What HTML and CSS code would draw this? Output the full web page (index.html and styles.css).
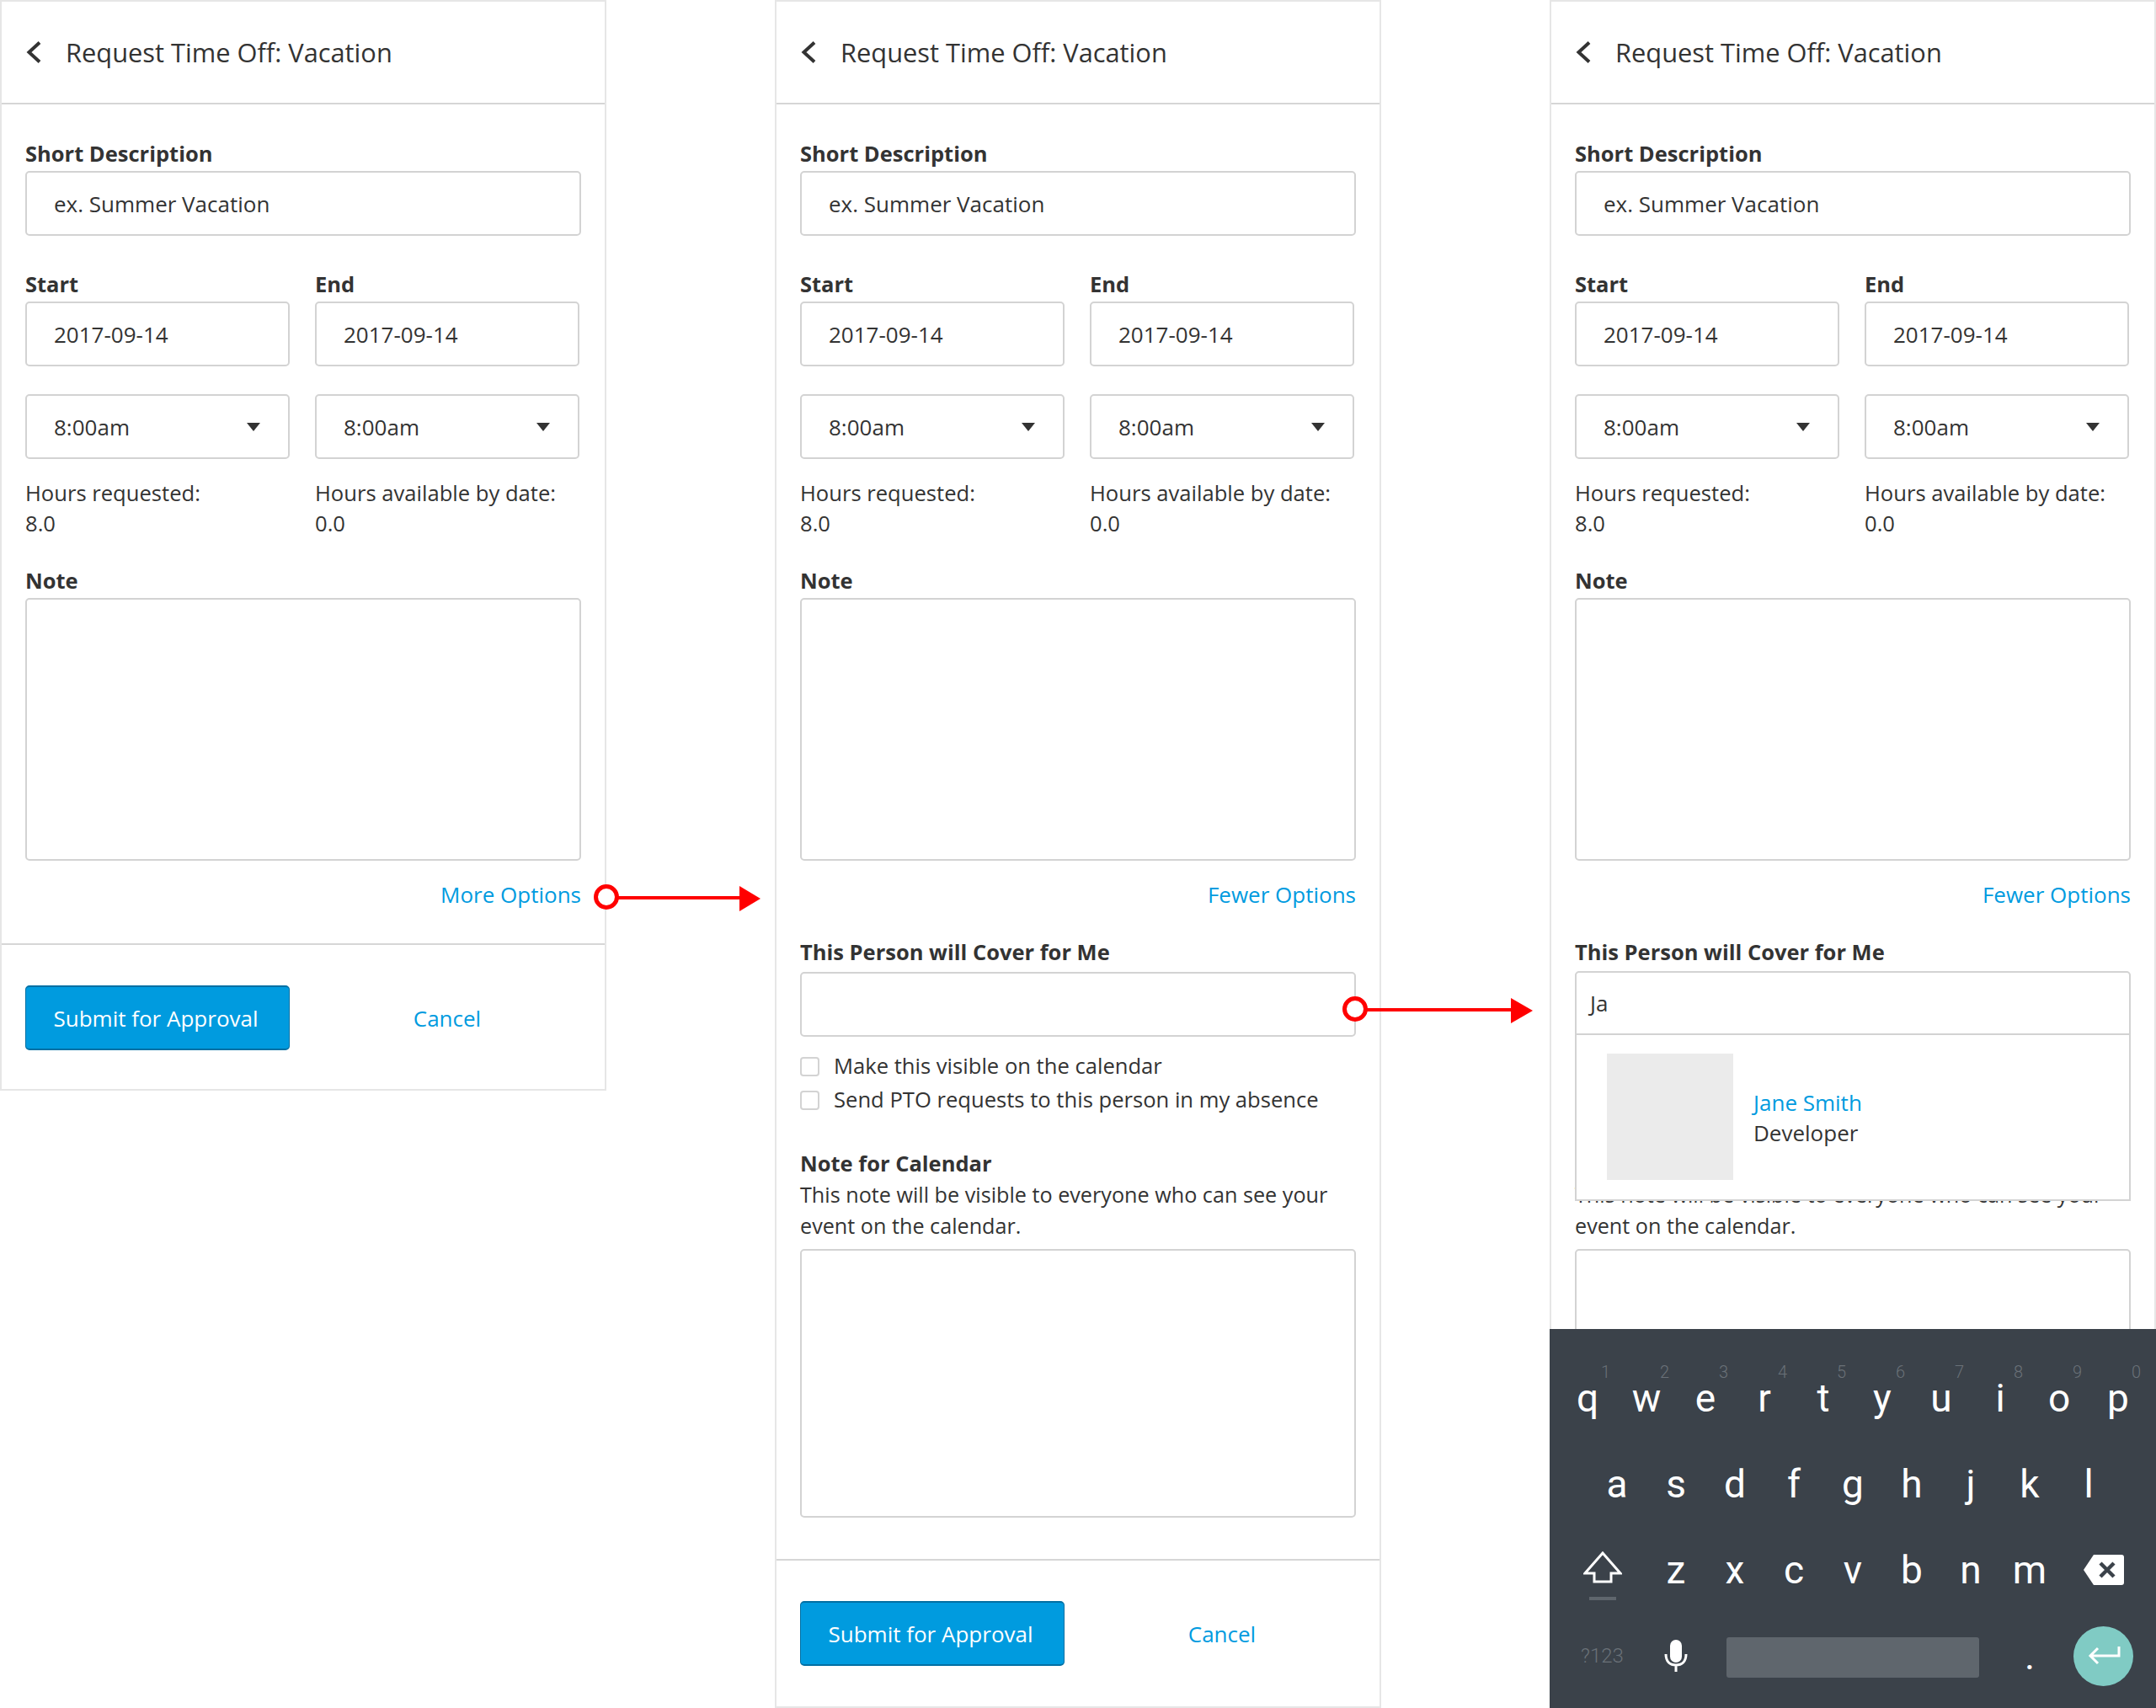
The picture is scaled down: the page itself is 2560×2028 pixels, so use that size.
FILE: index.html
```html
<!DOCTYPE html>
<html lang="en">
<head>
  <title>Request Time Off</title>
  <link rel="stylesheet" href="styles.css">
</head>
<body>
<div class="canvas">

  <!-- collapsed -->
  <div class="panel">
    <div class="panel-header">
      <svg class="back-icon" viewBox="0 0 20 26"><path d="M17 1.5 L4.5 13 L17 24.5"/></svg>
      <h1>Request Time Off: Vacation</h1>
    </div>
    <div class="form">
      <label class="section-title">Short Description</label>
      <input class="field" type="text" placeholder="ex. Summer Vacation">
      <div class="two-col dates">
        <div><label class="section-title">Start</label><input class="field" type="text" value="2017-09-14"></div>
        <div><label class="section-title">End</label><input class="field" type="text" value="2017-09-14"></div>
      </div>
      <div class="two-col times">
        <div class="field select">8:00am<span class="caret"></span></div>
        <div class="field select">8:00am<span class="caret"></span></div>
      </div>
      <div class="two-col hours">
        <div>Hours requested:<br>8.0</div>
        <div>Hours available by date:<br>0.0</div>
      </div>
      <label class="section-title note-label">Note</label>
      <div class="field note-area"></div>
      <div class="options-link"><a href="#">More Options</a></div>
    </div>
    <div class="panel-footer two-col">
      <button>Submit for Approval</button>
      <a class="cancel" href="#">Cancel</a>
    </div>
  </div>

  <!-- expanded -->
  <div class="panel panel-tall">
    <div class="panel-header">
      <svg class="back-icon" viewBox="0 0 20 26"><path d="M17 1.5 L4.5 13 L17 24.5"/></svg>
      <h1>Request Time Off: Vacation</h1>
    </div>
    <div class="form">
      <label class="section-title">Short Description</label>
      <input class="field" type="text" placeholder="ex. Summer Vacation">
      <div class="two-col dates">
        <div><label class="section-title">Start</label><input class="field" type="text" value="2017-09-14"></div>
        <div><label class="section-title">End</label><input class="field" type="text" value="2017-09-14"></div>
      </div>
      <div class="two-col times">
        <div class="field select">8:00am<span class="caret"></span></div>
        <div class="field select">8:00am<span class="caret"></span></div>
      </div>
      <div class="two-col hours">
        <div>Hours requested:<br>8.0</div>
        <div>Hours available by date:<br>0.0</div>
      </div>
      <label class="section-title note-label">Note</label>
      <div class="field note-area"></div>
      <div class="options-link"><a href="#">Fewer Options</a></div>

      <label class="section-title cover-label">This Person will Cover for Me</label>
      <input class="field" type="text">
      <div class="checks">
        <div class="check-row"><span class="checkbox"></span>Make this visible on the calendar</div>
        <div class="check-row"><span class="checkbox"></span>Send PTO requests to this person in my absence</div>
      </div>
      <label class="section-title calendar-label">Note for Calendar</label>
      <div class="description">This note will be visible to everyone who can see your event on the calendar.</div>
      <div class="field calendar-area"></div>
    </div>
    <div class="panel-footer two-col footer-tall">
      <button>Submit for Approval</button>
      <a class="cancel" href="#">Cancel</a>
    </div>
  </div>

  <!-- typing in the cover field -->
  <div class="panel panel-tall">
    <div class="panel-header">
      <svg class="back-icon" viewBox="0 0 20 26"><path d="M17 1.5 L4.5 13 L17 24.5"/></svg>
      <h1>Request Time Off: Vacation</h1>
    </div>
    <div class="form">
      <label class="section-title">Short Description</label>
      <input class="field" type="text" placeholder="ex. Summer Vacation">
      <div class="two-col dates">
        <div><label class="section-title">Start</label><input class="field" type="text" value="2017-09-14"></div>
        <div><label class="section-title">End</label><input class="field" type="text" value="2017-09-14"></div>
      </div>
      <div class="two-col times">
        <div class="field select">8:00am<span class="caret"></span></div>
        <div class="field select">8:00am<span class="caret"></span></div>
      </div>
      <div class="two-col hours">
        <div>Hours requested:<br>8.0</div>
        <div>Hours available by date:<br>0.0</div>
      </div>
      <label class="section-title note-label">Note</label>
      <div class="field note-area"></div>
      <div class="options-link"><a href="#">Fewer Options</a></div>

      <label class="section-title cover-label">This Person will Cover for Me</label>
      <div class="combo-wrap">
        <input class="field" type="text">
        <div class="combo">
          <div class="combo-input">Ja</div>
          <div class="combo-result">
            <div class="photo"></div>
            <div class="person">
              <a href="#">Jane Smith</a>
              <div>Developer</div>
            </div>
          </div>
        </div>
      </div>
      <div class="under-combo">
        <div class="checks">
          <div class="check-row"><span class="checkbox"></span>Make this visible on the calendar</div>
          <div class="check-row"><span class="checkbox"></span>Send PTO requests to this person in my absence</div>
        </div>
        <label class="section-title calendar-label">Note for Calendar</label>
      </div>
      <div class="description">This note will be visible to everyone who can see your event on the calendar.</div>
      <div class="field calendar-area"></div>
    </div>

    <div class="keyboard">
      <div class="key-row">
        <span class="key">q<i>1</i></span><span class="key">w<i>2</i></span><span class="key">e<i>3</i></span><span class="key">r<i>4</i></span><span class="key">t<i>5</i></span><span class="key">y<i>6</i></span><span class="key">u<i>7</i></span><span class="key">i<i>8</i></span><span class="key">o<i>9</i></span><span class="key">p<i>0</i></span>
      </div>
      <div class="key-row row-home">
        <span class="key">a</span><span class="key">s</span><span class="key">d</span><span class="key">f</span><span class="key">g</span><span class="key">h</span><span class="key">j</span><span class="key">k</span><span class="key">l</span>
      </div>
      <div class="key-row">
        <span class="key key-wide key-shift">
          <svg class="shift-icon" viewBox="0 0 46 38"><path d="M23 2 L44 26 H33 V36 H13 V26 H2 Z"/></svg>
          <span class="shift-bar"></span>
        </span>
        <span class="key">z</span><span class="key">x</span><span class="key">c</span><span class="key">v</span><span class="key">b</span><span class="key">n</span><span class="key">m</span>
        <span class="key key-wide">
          <svg class="backspace-icon" viewBox="0 0 48 36"><path class="backspace-body" d="M12 0 H45 Q48 0 48 3 V33 Q48 36 45 36 H12 L0 18 Z"/><path class="backspace-x" d="M20 10 L36 26 M36 10 L20 26"/></svg>
        </span>
      </div>
      <div class="key-row">
        <span class="key key-wide key-symbols">?123</span>
        <span class="key">
          <svg class="mic-icon" viewBox="0 0 28 38"><rect class="mic-body" x="7" y="0" width="14" height="27" rx="7"/><path class="mic-stand" d="M2 17 C2 26 7 30 14 30 C21 30 26 26 26 17 M14 30 V38"/></svg>
        </span>
        <span class="spacebar"></span>
        <span class="key">.</span>
        <span class="key key-wide">
          <span class="enter-btn">
            <svg class="enter-icon" viewBox="0 0 40 24"><path d="M38 1 V12 H4 M13 3 L4 12 L13 21"/></svg>
          </span>
        </span>
      </div>
    </div>
  </div>

  <!-- flow arrows between the screens -->
  <svg class="flow" viewBox="0 0 2560 2028">
    <line x1="734" y1="1066" x2="880" y2="1066"/>
    <circle cx="720" cy="1065" r="12.5"/>
    <polygon points="878,1052 903,1067 878,1082"/>
    <line x1="1623" y1="1199" x2="1796" y2="1199"/>
    <circle cx="1609" cy="1198" r="12.5"/>
    <polygon points="1794,1185 1820,1200 1794,1215"/>
  </svg>
</div>
</body>
</html>
```

FILE: styles.css
```css
* {
  box-sizing: border-box;
}

body {
  margin: 0;
  font-family: 'Open Sans', 'Noto Sans', sans-serif;
  font-size: 26px;
  line-height: 36px;
  color: #333;
  background-color: #fff;
}

a {
  color: #009bdf;
  text-decoration: none;
}

.canvas {
  position: relative;
  display: flex;
  align-items: flex-start;
  gap: 200px;
  height: 2028px;
  overflow: hidden;
}

.panel {
  position: relative;
  flex: 0 0 720px;
  border: 2px solid #e6e6e6;
  background: #fff;
}

.panel-tall {
  height: 2028px;
}

.panel-header {
  display: flex;
  align-items: center;
  height: 122px;
  padding-left: 28px;
  border-bottom: 2px solid #d6d6d6;
}

.panel-header h1 {
  margin: 0 0 0 28px;
  font-size: 30.8px;
  font-weight: 400;
  line-height: 40px;
}

.back-icon {
  width: 20px;
  height: 26px;
  fill: none;
  stroke: #333;
  stroke-width: 4;
}

.form {
  padding: 40px 28px 0;
}

.section-title {
  display: block;
  margin-bottom: 3px;
  font-size: 25.5px;
  font-weight: 700;
}

.field {
  display: block;
  width: 100%;
  height: 77px;
  padding: 0 32px;
  border: 2px solid #d3d3d3;
  border-radius: 5px;
  background: #fff;
  font-family: inherit;
  font-size: 26px;
  color: #333;
  outline: none;
}

.field::placeholder {
  color: #333;
  opacity: 1;
}

.two-col {
  display: grid;
  grid-template-columns: 314px 314px;
  column-gap: 30px;
}

.dates {
  margin-top: 39px;
}

.times {
  margin-top: 33px;
}

.select {
  position: relative;
  line-height: 75px;
}

.caret {
  position: absolute;
  top: 32px;
  right: 33px;
  border-top: 10px solid #333;
  border-left: 8px solid transparent;
  border-right: 8px solid transparent;
}

.hours {
  margin-top: 23px;
  font-size: 25.6px;
}

.note-label {
  margin-top: 31px;
}

.note-area {
  height: 312px;
}

.options-link {
  margin-top: 22px;
  text-align: right;
}

.panel-footer {
  margin-top: 40px;
  padding: 48px 28px 46px;
  border-top: 2px solid #d6d6d6;
  align-items: center;
}

.footer-tall {
  margin-top: 49px;
}

button {
  height: 77px;
  padding: 0 4px 0 0;
  border: 1px solid #006fa3;
  border-top-width: 2px;
  border-bottom-width: 2px;
  border-radius: 5px;
  background-color: #009bdf;
  font-family: inherit;
  font-size: 26px;
  color: #fff;
}

.cancel {
  text-align: center;
}

.cover-label {
  margin-top: 32px;
  margin-bottom: 6px;
}

.checks {
  margin-top: 15px;
}

.check-row {
  display: flex;
  align-items: center;
  height: 40px;
  font-size: 25.6px;
}

.checkbox {
  width: 23px;
  height: 23px;
  margin-right: 17px;
  border: 2px solid #d3d3d3;
  border-radius: 4px;
}

.calendar-label {
  margin-top: 37px;
  margin-bottom: 1px;
}

.description {
  font-size: 25.2px;
  line-height: 37px;
}

.calendar-area {
  height: 319px;
  margin-top: 9px;
}

/* search dropdown sits on top of the fields below */
.combo-wrap {
  position: relative;
}

.combo {
  position: absolute;
  top: -1px;
  left: 0;
  width: 100%;
  height: 273px;
  border: 2px solid #d3d3d3;
  border-radius: 5px 5px 0 0;
  background: #fff;
}

.combo-input {
  height: 74px;
  padding: 18px 16px 0;
  border-bottom: 2px solid #d3d3d3;
}

.combo-result {
  display: flex;
  align-items: center;
  padding: 22px 36px;
}

.photo {
  width: 150px;
  height: 150px;
  margin-right: 24px;
  background-color: #ebebeb;
}

.person {
  margin-top: 2px;
}

.under-combo {
  visibility: hidden;
}

/* android keyboard */
.keyboard {
  position: absolute;
  left: -2px;
  right: -2px;
  bottom: -2px;
  height: 450px;
  padding: 31px 10px 0;
  background-color: #3b424a;
  font-family: Roboto, sans-serif;
  color: #fff;
}

.key-row {
  display: flex;
  height: 102px;
}

.row-home {
  padding-left: 35px;
}

.key {
  position: relative;
  display: flex;
  align-items: center;
  justify-content: center;
  flex: 0 0 70px;
  font-size: 46px;
  line-height: 1;
}

.key i {
  position: absolute;
  top: 10px;
  right: 8px;
  font-size: 20px;
  font-style: normal;
  font-weight: 300;
  color: #6a7178;
}

.key-wide {
  flex-basis: 105px;
}

.key-shift {
  flex-direction: column;
  padding-top: 14px;
}

.shift-icon {
  width: 46px;
  height: 38px;
  fill: none;
  stroke: #fff;
  stroke-width: 3;
}

.shift-bar {
  width: 32px;
  height: 4px;
  margin-top: 16px;
  background-color: #5f666d;
}

.backspace-icon {
  width: 48px;
  height: 36px;
}

.backspace-body {
  fill: #fff;
}

.backspace-x {
  fill: none;
  stroke: #3b424a;
  stroke-width: 4.5;
}

.key-symbols {
  font-size: 24px;
  font-weight: 300;
  color: #6a7178;
}

.mic-icon {
  width: 28px;
  height: 38px;
}

.mic-body {
  fill: #fff;
}

.mic-stand {
  fill: none;
  stroke: #fff;
  stroke-width: 3;
}

.spacebar {
  flex: 0 0 300px;
  height: 48px;
  margin: 29px 25px 0;
  border-radius: 3px;
  background-color: #5f666d;
}

.enter-btn {
  display: flex;
  align-items: center;
  justify-content: center;
  width: 71px;
  height: 71px;
  border-radius: 50%;
  background-color: #80cbc4;
}

.enter-icon {
  width: 40px;
  height: 24px;
  fill: none;
  stroke: #fff;
  stroke-width: 3;
}

.flow {
  position: absolute;
  top: 0;
  left: 0;
  width: 2560px;
  height: 2028px;
  pointer-events: none;
}

.flow line {
  stroke: #f00;
  stroke-width: 4;
}

.flow circle {
  fill: #fff;
  stroke: #f00;
  stroke-width: 5;
}

.flow polygon {
  fill: #f00;
}
```
